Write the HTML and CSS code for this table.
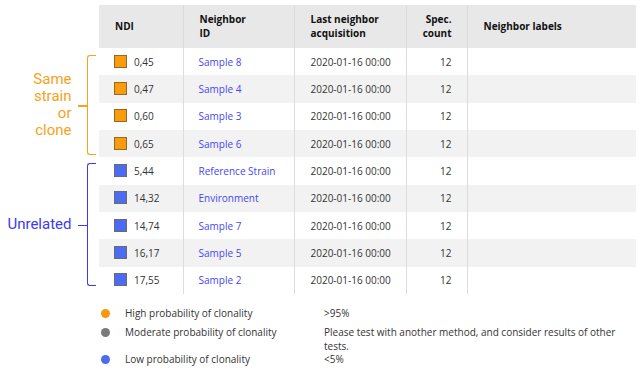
FILE: index.html
```html
<!DOCTYPE html>
<html lang="en">
<head>
  <meta charset="UTF-8">
  <title>Neighbors</title>
  <link rel="stylesheet" href="styles.css">
</head>
<body>
  <div class="layout">
    <div class="side">
      <div class="group group-clone">
        <span class="group-label">Same<br>strain<br>or<br>clone</span>
        <span class="brace"></span>
      </div>
      <div class="group group-unrelated">
        <span class="group-label">Unrelated</span>
        <span class="brace"></span>
      </div>
    </div>
    <table class="neighbors">
      <colgroup>
        <col class="c-ndi"><col class="c-id"><col class="c-date"><col class="c-count"><col class="c-labels">
      </colgroup>
      <thead>
        <tr>
          <th>NDI</th>
          <th>Neighbor<br>ID</th>
          <th>Last neighbor<br>acquisition</th>
          <th class="num">Spec.<br>count</th>
          <th>Neighbor labels</th>
        </tr>
      </thead>
      <tbody>
        <tr><td><span class="sq high"></span>0,45</td><td><a href="#">Sample 8</a></td><td>2020-01-16 00:00</td><td class="num">12</td><td></td></tr>
        <tr><td><span class="sq high"></span>0,47</td><td><a href="#">Sample 4</a></td><td>2020-01-16 00:00</td><td class="num">12</td><td></td></tr>
        <tr><td><span class="sq high"></span>0,60</td><td><a href="#">Sample 3</a></td><td>2020-01-16 00:00</td><td class="num">12</td><td></td></tr>
        <tr><td><span class="sq high"></span>0,65</td><td><a href="#">Sample 6</a></td><td>2020-01-16 00:00</td><td class="num">12</td><td></td></tr>
        <tr><td><span class="sq low"></span>5,44</td><td><a href="#">Reference Strain</a></td><td>2020-01-16 00:00</td><td class="num">12</td><td></td></tr>
        <tr><td><span class="sq low"></span>14,32</td><td><a href="#">Environment</a></td><td>2020-01-16 00:00</td><td class="num">12</td><td></td></tr>
        <tr><td><span class="sq low"></span>14,74</td><td><a href="#">Sample 7</a></td><td>2020-01-16 00:00</td><td class="num">12</td><td></td></tr>
        <tr><td><span class="sq low"></span>16,17</td><td><a href="#">Sample 5</a></td><td>2020-01-16 00:00</td><td class="num">12</td><td></td></tr>
        <tr><td><span class="sq low"></span>17,55</td><td><a href="#">Sample 2</a></td><td>2020-01-16 00:00</td><td class="num">12</td><td></td></tr>
      </tbody>
    </table>
  </div>
  <div class="legend">
    <div class="legend-row first">
      <span class="dot high"></span>
      <span>High probability of clonality</span>
      <span>&gt;95%</span>
    </div>
    <div class="legend-row">
      <span class="dot moderate"></span>
      <span>Moderate probability of clonality</span>
      <span>Please test with another method, and consider results of other tests.</span>
    </div>
    <div class="legend-row">
      <span class="dot low"></span>
      <span>Low probability of clonality</span>
      <span>&lt;5%</span>
    </div>
  </div>
</body>
</html>
```

FILE: styles.css
```css
html, body {
  margin: 0;
  padding: 0;
}
body {
  background: #fff;
  font-family: 'Open Sans', 'Noto Sans', Arial, sans-serif;
  font-size: 10px;
  color: #333;
  padding-top: 5px;
}
.layout {
  display: flex;
}

/* group brackets on the left */
.side {
  width: 99px;
  flex: none;
  display: flex;
  flex-direction: column;
  padding-top: 43px;
}
.group {
  display: flex;
  align-items: center;
}
.group-clone {
  height: 109.3px;
  color: #f7a21b;
}
.group-unrelated {
  height: 136.7px;
  color: #3b3bf2;
}
.group-label {
  flex: 1;
  text-align: right;
  font-family: Roboto, 'Open Sans', sans-serif;
  font-size: 15px;
  line-height: 17.3px;
  margin-right: 15px;
}
.group-clone .group-label {
  margin-top: 5px;
}
.group-unrelated .group-label {
  margin-top: -2px;
}
.brace {
  align-self: stretch;
  width: 8.5px;
  margin: 7px 3px 2px 0;
  border: 1.5px solid currentColor;
  border-right: none;
  border-radius: 3px 0 0 3px;
  position: relative;
}
.group-unrelated .brace {
  margin: 6px 3px 8px 0;
}
.brace::before {
  content: '';
  position: absolute;
  left: -10px;
  top: 50%;
  width: 9px;
  height: 1.5px;
  background: currentColor;
}

/* table */
.neighbors {
  width: 537px;
  border-collapse: collapse;
  table-layout: fixed;
}
.c-ndi { width: 84px; }
.c-id { width: 111px; }
.c-date { width: 112px; }
.c-count { width: 61px; }
.c-labels { width: 169px; }
.neighbors th {
  background: #e8e8e8;
  height: 43px;
  padding: 0 15px 0 16px;
  text-align: left;
  font-weight: 700;
  color: #111;
  line-height: 13.3px;
  vertical-align: middle;
}
.neighbors td {
  height: 27.33px;
  padding: 0 15px 0 16px;
  vertical-align: middle;
  white-space: nowrap;
}
.neighbors th + th,
.neighbors td + td {
  border-left: 1px solid #dcdcdc;
}
.neighbors td:nth-child(2) {
  padding-left: 15px;
}
.neighbors .num {
  text-align: right;
}
.neighbors tbody tr:nth-child(even) {
  background: #f2f2f2;
}
.neighbors a {
  color: #4646f2;
  text-decoration: none;
}
.sq {
  display: inline-block;
  width: 11px;
  height: 11px;
  margin-left: -1px;
  margin-right: 7px;
  vertical-align: -2px;
  border: 1px solid;
}
.sq.high {
  background: #f99b0a;
  border-color: #8f6a2c;
}
.sq.low {
  background: #4b6cf2;
  border-color: #6b6b6b;
}

/* legend */
.legend {
  margin-top: 13px;
  padding-left: 100px;
  line-height: 13.4px;
}
.legend-row {
  display: grid;
  grid-template-columns: 25px 199px 308px;
  align-items: start;
}
.legend-row.first {
  margin-bottom: 6px;
}
.dot {
  width: 9px;
  height: 9px;
  margin: 2px 0 0 1px;
  border-radius: 50%;
}
.dot.high { background: #f39a12; }
.dot.moderate { background: #7a7a7a; }
.dot.low { background: #4a6cf0; }
```
